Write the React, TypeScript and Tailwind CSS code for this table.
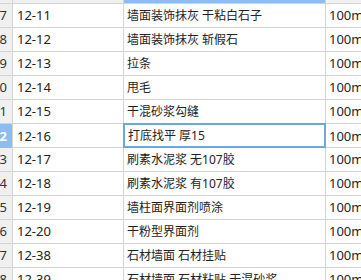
const rows = [
  { n: 57, code: "12-11", name: "墙面装饰抹灰 干粘白石子" },
  { n: 58, code: "12-12", name: "墙面装饰抹灰 斩假石" },
  { n: 59, code: "12-13", name: "拉条" },
  { n: 60, code: "12-14", name: "甩毛" },
  { n: 61, code: "12-15", name: "干混砂浆勾缝" },
  { n: 62, code: "12-16", name: "打底找平 厚15" },
  { n: 63, code: "12-17", name: "刷素水泥浆 无107胶" },
  { n: 64, code: "12-18", name: "刷素水泥浆 有107胶" },
  { n: 65, code: "12-19", name: "墙柱面界面剂喷涂" },
  { n: 66, code: "12-20", name: "干粉型界面剂" },
  { n: 67, code: "12-38", name: "石材墙面 石材挂贴" },
  { n: 68, code: "12-39", name: "石材墙面 石材粘贴 干混砂浆" },
];

const SELECTED = 62;

export default function App() {
  return (
    <div
      className="h-[280px] w-[361px] overflow-hidden bg-white text-[12px] text-[#222]"
      style={{ fontFamily: '"Noto Sans", "Noto Sans CJK SC", sans-serif' }}
    >
      {/* header strip, scrolled mostly out of view */}
      <div className="grid h-[4px] grid-cols-[13px_111px_202px_1fr] border-b border-[#d4d4d4]">
        <div className="border-r border-[#d4d4d4] bg-[#f0f0f0]" />
        <div className="border-r border-[#d4d4d4] bg-[#f0f0f0]" />
        <div className="border-r border-[#d4d4d4] bg-[#8dbdf0]" />
        <div className="bg-[#f0f0f0]" />
      </div>

      {rows.map((r) => {
        const active = r.n === SELECTED;
        return (
          <div
            key={r.code}
            className="grid h-[24px] grid-cols-[13px_111px_202px_1fr] border-b border-[#d4d4d4]"
          >
            <div
              className={`flex items-center justify-end overflow-hidden border-r border-[#d4d4d4] pr-[5px] pt-px text-[13px] ${
                active ? "bg-[#8dbdf0] font-bold text-white" : "bg-[#f0f0f0] text-[#333]"
              }`}
            >
              <span className="shrink-0">{r.n}</span>
            </div>
            <div className="flex items-center overflow-hidden whitespace-nowrap border-r border-[#d4d4d4] pl-[4px] pt-px text-[13px]">
              {r.code}
            </div>
            <div
              className={`flex items-center overflow-hidden whitespace-nowrap pl-[3px] pt-px ${
                active
                  ? "-mt-px ml-[-1px] h-[25px] border-2 border-[#6fa6e0] pl-[2px]"
                  : "border-r border-[#d4d4d4]"
              }`}
            >
              {r.name}
            </div>
            <div className="flex items-center overflow-hidden whitespace-nowrap pl-[3px] pt-px text-[13px]">
              100m²
            </div>
          </div>
        );
      })}
    </div>
  );
}
